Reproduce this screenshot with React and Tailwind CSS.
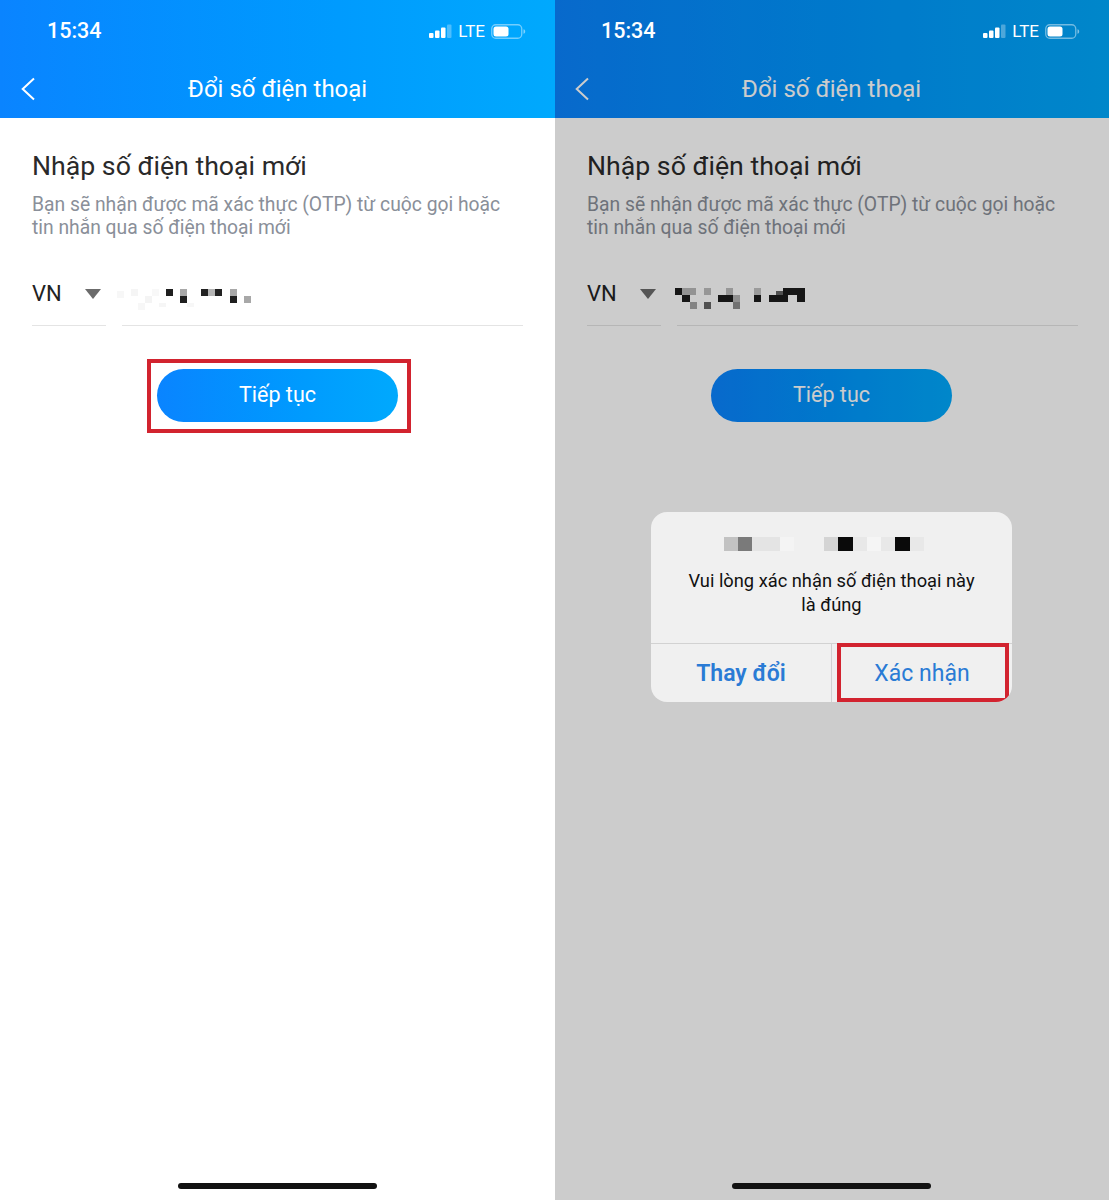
const leftPixels = [
  [117, 291, 7, 7, '#f7f7f7'], [131, 289, 7, 7, '#f5f5f5'], [145, 296, 7, 7, '#f4f4f4'], [152, 289, 7, 7, '#f8f8f8'],
  [138, 303, 7, 7, '#f7f7f7'], [159, 303, 7, 4, '#f6f6f6'], [187, 303, 7, 4, '#f7f7f7'],
  [166, 289, 7, 7, '#1f1f1f'], [180, 289, 7, 7, '#a8a8a8'], [180, 296, 7, 7, '#1f1f1f'],
  [201, 289, 7, 7, '#222222'], [208, 289, 7, 7, '#b5b5b5'], [215, 289, 7, 7, '#222222'],
  [230, 289, 7, 7, '#a8a8a8'], [230, 296, 7, 7, '#1f1f1f'], [244, 296, 7, 7, '#a8a8a8'],
];

const rightPixels = [
  [675, 288, 7, 7, '#1c1c1c'], [682, 288, 14, 7, '#b8b8b8'], [682, 295, 8, 7, '#1c1c1c'], [690, 302, 7, 7, '#a5a5a5'],
  [704, 302, 7, 7, '#666666'], [704, 288, 7, 7, '#bdbdbd'], [718, 295, 15, 7, '#1c1c1c'], [726, 288, 7, 7, '#bdbdbd'],
  [733, 302, 7, 7, '#8e8e8e'], [733, 295, 7, 7, '#b5b5b5'], [754, 295, 7, 7, '#1c1c1c'], [754, 288, 7, 7, '#c2c2c2'],
  [769, 295, 14, 7, '#1c1c1c'], [783, 288, 22, 7, '#1c1c1c'], [776, 291, 7, 4, '#666666'], [783, 295, 5, 7, '#1c1c1c'], [797, 295, 8, 7, '#1c1c1c'],
];

const dialogPixels = [
  [724, 537, 14, 14, '#c2c2c2'], [738, 537, 14, 14, '#7a7a7a'], [752, 537, 28, 14, '#e4e4e4'], [780, 537, 14, 14, '#f4f4f4'],
  [824, 537, 14, 14, '#d4d4d4'], [838, 537, 15, 14, '#0a0a0a'], [853, 537, 14, 14, '#e8e8e8'], [867, 537, 14, 14, '#f5f5f5'],
  [881, 537, 14, 14, '#e8e8e8'], [895, 537, 15, 14, '#0a0a0a'], [910, 537, 14, 14, '#e8e8e8'],
];

// mosaics are placed in page coordinates, the viewBox crops them to the panel
function Mosaic({ pixels, x, y, width, height }) {
  return (
    <svg width={width} height={height} viewBox={`${x} ${y} ${width} ${height}`} shapeRendering="crispEdges" className="block">
      {pixels.map(([px, py, w, h, fill], i) => (
        <rect key={i} x={px} y={py} width={w} height={h} fill={fill} />
      ))}
    </svg>
  );
}

function StatusIcons() {
  return (
    <div className="mt-[2px] flex items-center">
      <svg width="26" height="15" viewBox="0 0 26 15" className="block">
        <rect x="1" y="9" width="4.5" height="5" rx="1" fill="#fff" />
        <rect x="7" y="6.5" width="4.5" height="7.5" rx="1" fill="#fff" />
        <rect x="13" y="3.5" width="4.5" height="10.5" rx="1" fill="#fff" />
        <rect x="19" y="0.5" width="4.5" height="13.5" rx="1" fill="#fff" fillOpacity="0.3" />
      </svg>
      <span className="ml-[4px] text-[17px] leading-none text-white">LTE</span>
      <svg width="35" height="15" viewBox="0 0 35 15" className="ml-[6px] block">
        <rect x="0.75" y="0.75" width="30" height="13.5" rx="4" fill="none" stroke="#fff" strokeOpacity="0.45" strokeWidth="1.3" />
        <rect x="2.5" y="2.5" width="15" height="10" rx="2.5" fill="#fff" />
        <path d="M32.5 5.2c1.1.3 1.7 1.2 1.7 2.3s-.6 2-1.7 2.3z" fill="#fff" fillOpacity="0.5" />
      </svg>
    </div>
  );
}

function Screen({ pixels, mosaicX, dimmed, children }) {
  // the right shot sits a pixel off for its text column
  const nudge = dimmed ? 'ml-px' : '';

  return (
    <div className={`flex h-[1200px] w-[555px] shrink-0 flex-col bg-white ${dimmed ? 'relative -ml-px' : 'relative z-30'}`}>
      <header className="h-[118px] bg-gradient-to-r from-[#0a84ff] to-[#00a9fd]">
        <div className="relative z-20 flex h-[60px] items-center justify-between pl-[47px] pr-[29px]">
          <span className="mt-[1px] text-[21.5px] font-medium leading-none text-white">15:34</span>
          <StatusIcons />
        </div>
        <div className="relative flex h-[57px] items-center justify-center">
          <svg width="14" height="24" viewBox="0 0 14 24" className="absolute left-[21px] top-[17px]">
            <path d="M13 1.5 1.7 12 13 22.5" fill="none" stroke="#fff" strokeWidth="2" />
          </svg>
          <span className="text-[24px] leading-none text-white">Đổi số điện thoại</span>
        </div>
      </header>

      <div className="flex flex-1 flex-col px-[32px]">
        <h1 className={`mt-[32px] text-[26.7px] font-[450] leading-[32px] text-[#2a2a2a] ${nudge}`}>Nhập số điện thoại mới</h1>
        <p className={`mt-[11px] w-[480px] text-[19.3px] leading-[23px] text-[#8a8f99] ${nudge}`}>
          Bạn sẽ nhận được mã xác thực (OTP) từ cuộc gọi hoặc tin nhắn qua số điện thoại mới
        </p>

        <div className={`mt-[30px] flex h-[57px] w-[491px] ${nudge}`}>
          <div className="flex w-[74px] items-center justify-between border-b border-[#e4e4e4] pb-[6px] pr-[5px]">
            <span className="text-[22px] leading-none text-[#222]">VN</span>
            <svg width="16" height="10" viewBox="0 0 16 10" className="block">
              <path d="M0 0h16L8 10z" fill="#6b6b6b" />
            </svg>
          </div>
          <div className="ml-[16px] flex-1 border-b border-[#e4e4e4] pt-[17px]">
            <div className="-ml-[12px]">
              <Mosaic pixels={pixels} x={mosaicX} y={286} width={150} height={26} />
            </div>
          </div>
        </div>

        <div className="relative mx-auto mt-[43px] flex h-[53px] w-[241px] items-center justify-center rounded-full bg-gradient-to-r from-[#0a84ff] to-[#00a9fd]">
          <span className="mb-[1px] text-[21.5px] leading-none text-white">Tiếp tục</span>
          {!dimmed && <div className="absolute -top-[10px] -right-[13px] -bottom-[11px] -left-[10px] border-[4px] border-[#d2232f]" />}
        </div>
      </div>

      <div className="relative z-20 mx-auto mb-[11px] h-[6px] w-[199px] rounded-full bg-[#111]" />
      {dimmed && <div className="absolute inset-0 z-10 flex justify-center bg-black/20 pt-[512px]">{children}</div>}
    </div>
  );
}

function ConfirmDialog() {
  return (
    <div className="relative flex h-[190px] w-[361px] flex-col overflow-hidden rounded-[16px] bg-[#f0f0f0]">
      <div className="flex h-[131px] flex-col items-center">
        <div className="mt-[25px]">
          <Mosaic pixels={dialogPixels} x={651} y={537} width={361} height={14} />
        </div>
        <p className="mt-[18px] w-[300px] text-center text-[18.3px] leading-[24px] text-[#111]">
          Vui lòng xác nhận số điện thoại này là đúng
        </p>
      </div>
      <div className="flex flex-1 border-t border-[#d2d2d2]">
        <div className="flex w-[181px] items-center justify-center border-r border-[#d2d2d2] pt-[2px] text-[23px] font-semibold text-[#2a7bd5]">
          Thay đổi
        </div>
        <div className="flex flex-1 items-center justify-center pt-[2px] text-[23px] text-[#2a7bd5]">Xác nhận</div>
      </div>
      <div className="absolute bottom-0 right-[3px] h-[59px] w-[172px] border-[4px] border-[#d2232f]" />
    </div>
  );
}

export default function App() {
  return (
    <div className="flex h-[1200px] w-[1109px] overflow-hidden bg-white font-['Roboto',sans-serif]">
      <Screen pixels={leftPixels} mosaicX={110} />
      <Screen pixels={rightPixels} mosaicX={665} dimmed>
        <ConfirmDialog />
      </Screen>
    </div>
  );
}
